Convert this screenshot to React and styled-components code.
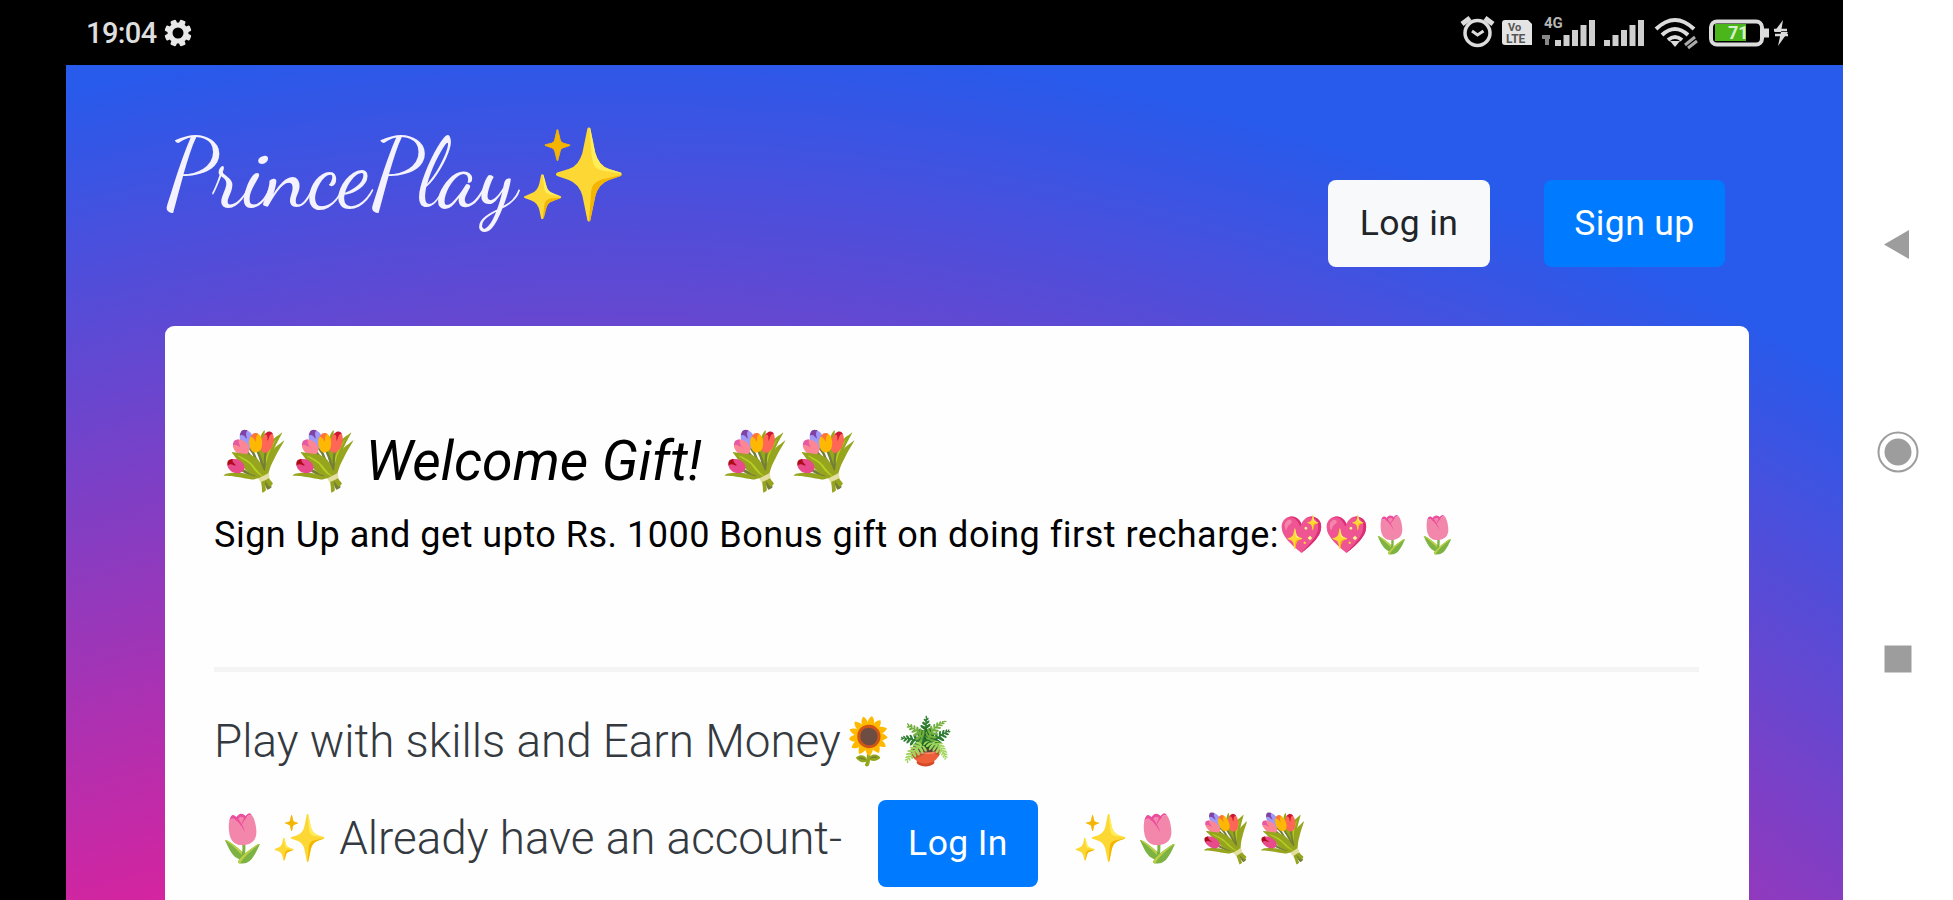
import React from 'react';
import styled, { createGlobalStyle } from 'styled-components';

const GlobalStyle = createGlobalStyle`
  * {
    box-sizing: border-box;
  }

  body {
    margin: 0;
    background: #000;
    overflow: hidden;
  }
`;

const Screen = styled.div`
  display: grid;
  grid-template-columns: 66px 1777px 110px;
  grid-template-rows: 65px 835px;
  width: 1953px;
  height: 900px;
  background: #000;
  font-family: Roboto, 'Noto Color Emoji', sans-serif;
  overflow: hidden;
`;

const StatusBar = styled.div`
  grid-column: 1 / 3;
  display: flex;
  align-items: center;
  padding: 1px 49px 0 86px;
  color: #dedede;
`;

const Clock = styled.span`
  width: 70px;
  font-size: 29px;
  font-weight: 500;
  line-height: 30px;
  letter-spacing: -0.6px;
  margin-right: 8px;
`;

const StatusIcons = styled.div`
  display: flex;
  margin-left: auto;
`;

const NavBar = styled.div`
  grid-column: 3;
  grid-row: 1 / 3;
  background: #fff;
  display: flex;
  flex-direction: column;
  align-items: center;
  padding-top: 223px;
  gap: 163px;
`;

const Page = styled.main`
  grid-column: 2;
  padding: 0 94px 0 99px;
  background: radial-gradient(circle 2703px at 533px 2400px, #d6249f 60%, #285aeb 90%);
  display: flex;
  flex-direction: column;
  overflow: hidden;
`;

const Header = styled.header`
  display: flex;
  justify-content: space-between;
  height: 261px;
  flex-shrink: 0;
`;

const Brand = styled.div`
  margin-top: 50px;
  height: 125px;
`;

const HeaderButtons = styled.div`
  display: flex;
  gap: 54px;
  padding: 115px 24px 0 0;
`;

const Button = styled.button`
  width: ${props => props.$width}px;
  height: 87px;
  flex-shrink: 0;
  padding: 0 0 2px;
  border: none;
  border-radius: 8px;
  background: ${props => props.$light ? '#f8f9fa' : '#007bff'};
  color: ${props => props.$light ? '#212529' : '#fff'};
  font-family: Roboto, sans-serif;
  font-size: 35.5px;
  font-weight: 400;
  letter-spacing: 0.4px;
`;

const Card = styled.section`
  flex: 1;
  padding: 98px 50px 0 49px;
  background: #fefefe;
  border-radius: 9px 9px 0 0;
  color: #000;
`;

const Title = styled.h1`
  display: flex;
  align-items: center;
  margin: 0;
  height: 74px;
  font-size: 55.4px;
  font-style: italic;
  font-weight: 400;
  white-space: pre;
`;

const Offer = styled.p`
  display: flex;
  align-items: center;
  margin: 11px 0 0;
  height: 52px;
  font-size: 36px;
  letter-spacing: 0.5px;
  white-space: pre;
`;

const Divider = styled.hr`
  height: 5px;
  margin: 106px 0 0;
  border: none;
  background: #f4f4f4;
`;

const Lead = styled.div`
  display: flex;
  align-items: center;
  height: ${props => props.$height}px;
  margin-top: ${props => props.$top}px;
  font-size: 45.8px;
  font-weight: 300;
  color: #343a40;
  white-space: pre;
`;

const Label = styled.span`
  width: ${props => props.$width}px;
  padding-bottom: 11px;
  flex-shrink: 0;
`;

const Trailing = styled.span`
  padding: 0 0 11px 34px;
`;

function Gear() {
  return (
    <svg width="28" height="28" viewBox="-14 -14 28 28">
      <g fill="#e8e8e8">
        {[0, 45, 90, 135, 180, 225, 270, 315].map(a => (
          <rect key={a} x="-3" y="-13.5" width="6" height="7" rx="1.5" transform={`rotate(${a + 22.5})`} />
        ))}
      </g>
      <circle r="8" fill="none" stroke="#e8e8e8" strokeWidth="5" />
    </svg>
  );
}

function StatusGlyphs() {
  return (
    <svg width="340" height="40" viewBox="1455 13 340 40" fill="none" stroke="#dcdcdc">
      <circle cx="1478.5" cy="33" r="12.5" strokeWidth="3.5" />
      <path d="M1463 24l8-6M1494 24l-8-6" strokeWidth="5" />
      <path d="M1473 31l5.5 4 6-4" strokeWidth="3" />
      <path d="M1506 20h23l4 4v21h-27q-3 0-3-3v-19q0-3 3-3z" fill="#e4e4e4" stroke="none" />
      <g fontFamily="Roboto" fontWeight="700" stroke="none">
        <text x="1509" y="31" fontSize="11" fill="#555">Vo</text>
        <text x="1507" y="43" fontSize="12" fill="#555">LTE</text>
        <text x="1545" y="28" fontSize="15" fill="#b5b5b5">4G</text>
      </g>
      <path d="M1543 37h8M1548 36v9" stroke="#888" strokeWidth="4" />
      <g fill="#cfcfcf" stroke="none">
        {[0, 1, 2, 3, 4].map(i => (
          <rect key={i} x={1556 + i * 8.5} y={40 - i * 5} width="6" height={6 + i * 5} />
        ))}
        {[0, 1, 2, 3, 4].map(i => (
          <rect key={i} x={1605 + i * 8.5} y={40 - i * 5} width="6" height={6 + i * 5} />
        ))}
      </g>
      <g strokeWidth="4">
        <path d="M1657 29q19-18 38 0M1663 35q13-12 26 0M1669 40q7-6 14 0" />
        <path d="M1671 41h10l-5 6z" fill="#dcdcdc" stroke="none" />
        <path d="M1686 45l10-8M1689 48l9-7" stroke="#aaa" strokeWidth="3" />
      </g>
      <rect x="1712" y="21.5" width="51" height="23" rx="6" strokeWidth="4" />
      <rect x="1716" y="24" width="31" height="17" fill="#4bb51c" stroke="none" />
      <path d="M1765 33h5" strokeWidth="9" />
      <text x="1729" y="39" fontFamily="Roboto" fontSize="18" fontWeight="700" fill="#d9f2cc" stroke="none">71</text>
      <path d="M1784 20l-9 12h7l-3 14 10-14h-7z" fill="#dcdcdc" stroke="none" />
      <path d="M1775 30h13M1776 35h13" strokeWidth="2.5" />
    </svg>
  );
}

function Logo() {
  return (
    <svg width="465" height="125" viewBox="165 115 465 125">
      <text
        x="165" y="205" textLength="352" lengthAdjust="spacingAndGlyphs"
        fill="#f4f2ff" fontFamily="'Dancing Script', Pacifico, cursive" fontSize="97"
      >
        PrincePlay
      </text>
      <text x="517.5" y="206" fontFamily="'Noto Color Emoji'" fontSize="90">✨</text>
    </svg>
  );
}

export default function App() {
  return (
    <>
      <GlobalStyle />
      <Screen>
        <StatusBar>
          <Clock>19:04</Clock>
          <Gear />
          <StatusIcons><StatusGlyphs /></StatusIcons>
        </StatusBar>
        <NavBar>
          <svg width="44" height="44" viewBox="0 0 44 44"><path d="M8 21.5L33 7v29z" fill="#9d9d9d" /></svg>
          <svg width="44" height="44" viewBox="0 0 44 44">
            <circle cx="22" cy="22" r="13.5" fill="#9d9d9d" />
            <circle cx="22" cy="22" r="19.5" fill="none" stroke="#9d9d9d" strokeWidth="2" />
          </svg>
          <svg width="44" height="44" viewBox="0 0 44 44"><path d="M8.5 8.5h27v27h-27z" fill="#9d9d9d" /></svg>
        </NavBar>
        <Page>
          <Header>
            <Brand><Logo /></Brand>
            <HeaderButtons>
              <Button $width={162} $light>Log in</Button>
              <Button $width={181}>Sign up</Button>
            </HeaderButtons>
          </Header>
          <Card>
            <Title>💐💐 Welcome Gift! 💐💐</Title>
            <Offer>Sign Up and get upto Rs. 1000 Bonus gift on doing first recharge:💖💖🌷🌷</Offer>
            <Divider />
            <Lead $top={33} $height={72}>Play with skills and Earn Money🌻🪴</Lead>
            <Lead $top={23} $height={87}>
              <Label $width={664}>🌷✨ Already have an account-</Label>
              <Button $width={160}>Log In</Button>
              <Trailing>✨🌷 💐💐</Trailing>
            </Lead>
          </Card>
        </Page>
      </Screen>
    </>
  );
}
